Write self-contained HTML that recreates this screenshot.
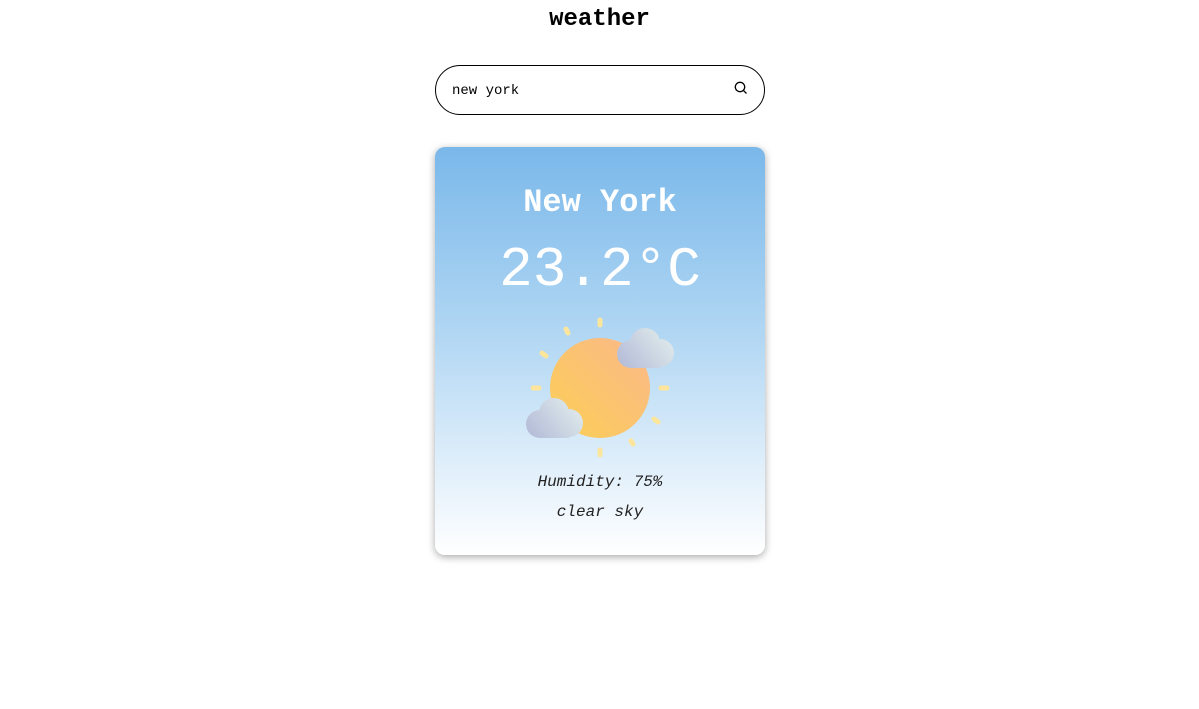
<!DOCTYPE html>
<html><head><style>
body{margin:0;background:#fff;font-family:"Liberation Mono",monospace;width:1199px;height:709px;overflow:hidden;position:relative}
h1{position:absolute;top:2px;left:0;width:100%;text-align:center;margin:0;font-size:24px;line-height:36px;font-weight:bold;color:#000}
.search{position:absolute;left:435px;top:65px;width:328px;height:48px;border:1px solid #000;border-radius:25px}
.search span{position:absolute;left:16px;top:17px;font-size:14px}
.search svg{position:absolute;right:16px;top:15px}
.card{position:absolute;left:435px;top:147px;width:330px;height:408px;border-radius:10px;background:linear-gradient(#7ab8ea,#b0d6f3 45%,#ffffff 100%);box-shadow:0 2px 8px rgba(0,0,0,.35);color:#fff;text-align:center}
.city{position:absolute;top:37px;width:100%;font-size:32px;font-weight:bold}
.temp{position:absolute;top:88px;width:100%;font-size:56px;line-height:70px}
.info{position:absolute;width:100%;font-size:16px;font-style:italic;color:#222}
</style></head><body>
<h1>weather</h1>
<div class="search"><span>new york</span>
<svg width="14" height="14" viewBox="0 0 14 14" fill="none" stroke="#000" stroke-width="1.3"><circle cx="6" cy="6" r="4.7"/><line x1="9.4" y1="9.4" x2="12.5" y2="12.5"/></svg></div>
<div class="card">
<div class="city">New York</div>
<div class="temp">23.2°C</div>
<svg style="position:absolute;left:85px;top:165px" width="160" height="150" viewBox="85 165 160 150">
<defs>
<linearGradient id="s" x1="1" y1="0" x2="0" y2="1"><stop offset="0" stop-color="#fbb88a"/><stop offset="1" stop-color="#fbcf55"/></linearGradient>
<linearGradient id="c1" gradientUnits="userSpaceOnUse" x1="239" y1="179" x2="187" y2="221"><stop offset="0" stop-color="#e6f1ee"/><stop offset="1" stop-color="#b4bcd8"/></linearGradient>
<linearGradient id="c2" gradientUnits="userSpaceOnUse" x1="148" y1="249" x2="96" y2="291"><stop offset="0" stop-color="#e6f1ee"/><stop offset="1" stop-color="#b4bcd8"/></linearGradient>
</defs>
<g stroke="#fde59c" stroke-width="5" stroke-linecap="round">
<line x1="165" y1="173" x2="165" y2="178"/>
<line x1="131" y1="182" x2="133" y2="186"/>
<line x1="107" y1="206" x2="111" y2="209"/>
<line x1="98" y1="241" x2="104" y2="241"/>
<line x1="226" y1="241" x2="232" y2="241"/>
<line x1="219" y1="272" x2="223" y2="275"/>
<line x1="196" y1="294" x2="198" y2="297"/>
<line x1="165" y1="303" x2="165" y2="308"/>
</g>
<circle cx="165" cy="241" r="50" fill="url(#s)"/>
<g fill="url(#c1)"><circle cx="210" cy="196" r="15"/><circle cx="225" cy="206" r="14"/><circle cx="196" cy="207" r="14"/><rect x="196" y="196" width="29" height="25"/></g>
<g fill="url(#c2)"><circle cx="119" cy="266" r="15"/><circle cx="134" cy="276" r="14"/><circle cx="105" cy="277" r="14"/><rect x="105" y="266" width="29" height="25"/></g>
</svg>
<div class="info" style="top:326px">Humidity: 75%</div>
<div class="info" style="top:356px">clear sky</div>
</div>
</body></html>
